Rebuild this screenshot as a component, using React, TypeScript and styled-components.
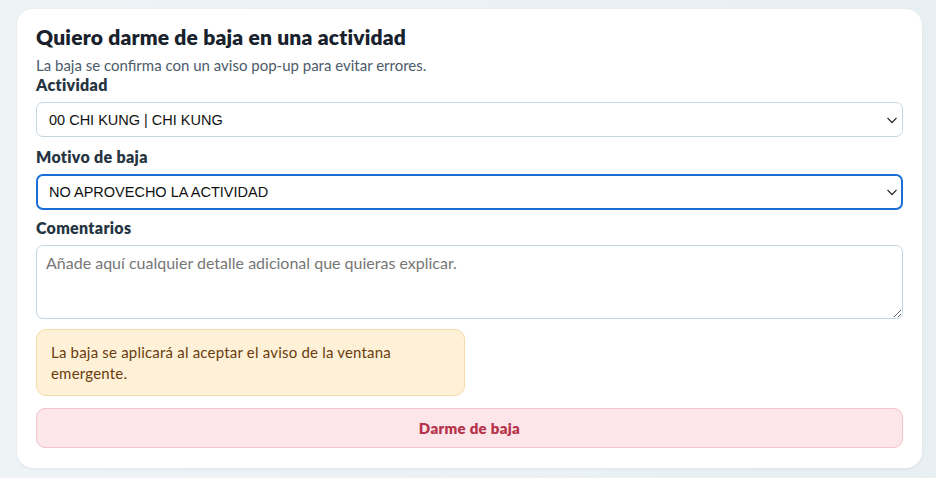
import { createGlobalStyle, styled } from "styled-components";

const GlobalStyle = createGlobalStyle`
  * { box-sizing: border-box; }
  html, body { margin: 0; padding: 0; }
  body {
    background: linear-gradient(90deg, #eef3f6 0%, #e8eff3 100%);
    font-family: Lato, "Noto Sans", sans-serif;
  }
`;

const Page = styled.div`
  width: 936px;
  height: 478px;
  padding: 9px 14px 0 17px;
`;

const Card = styled.section`
  background: #ffffff;
  border-radius: 16px;
  box-shadow: 0 1px 3px rgba(40, 70, 90, 0.08);
  padding: 15px 19px 20px 19px;
  display: flex;
  flex-direction: column;
`;

const Title = styled.h2`
  margin: 0;
  font-size: 21px;
  line-height: 26px;
  font-weight: 800;
  letter-spacing: 0.2px;
  color: #18222c;
`;

const Subtitle = styled.p`
  margin: 7px 0 0;
  font-size: 15px;
  line-height: 17px;
  color: #4b5b6a;
`;

const Field = styled.div<{ top: number }>`
  display: flex;
  flex-direction: column;
  gap: 8px;
  margin-top: ${(p) => p.top}px;
`;

const Label = styled.label`
  font-size: 16px;
  line-height: 18px;
  font-weight: 800;
  letter-spacing: 0.3px;
  color: #263542;
`;

const SelectWrap = styled.div`
  position: relative;
`;

const Select = styled.select<{ focused?: boolean }>`
  appearance: none;
  width: 100%;
  height: ${(p) => (p.focused ? 36 : 35)}px;
  padding: 0 36px 0 ${(p) => (p.focused ? 11 : 12)}px;
  border-radius: 7px;
  border: ${(p) => (p.focused ? "2px solid #1a6fd6" : "1px solid #c9d7e1")};
  background: #ffffff;
  font-family: "Liberation Sans", Arial, sans-serif;
  font-size: 14.5px;
  color: #111111;
  outline: none;
`;

const Chevron = styled.svg`
  position: absolute;
  right: 5px;
  top: 50%;
  transform: translateY(-50%);
  width: 12px;
  height: 12px;
  pointer-events: none;
`;

const TextArea = styled.textarea`
  width: 100%;
  height: 74px;
  border: 1px solid #c3d4df;
  border-radius: 7px;
  padding: 7px 9px;
  font-family: Lato, "Noto Sans", sans-serif;
  font-size: 16px;
  line-height: 20px;
  color: #222;
  resize: vertical;
  outline: none;
  &::placeholder {
    color: #767676;
  }
`;

const Notice = styled.div`
  margin-top: 10px;
  width: 429px;
  background: #fef1d8;
  border: 1px solid #f5dba6;
  border-radius: 10px;
  padding: 12px 14px 11px;
  font-size: 15px;
  line-height: 21px;
  letter-spacing: 0.2px;
  color: #6a3c0c;
`;

const DangerButton = styled.button`
  margin-top: 12px;
  width: 100%;
  height: 40px;
  background: #fde6ea;
  border: 1px solid #f6c3ce;
  border-radius: 9px;
  font-family: Lato, "Noto Sans", sans-serif;
  font-size: 15px;
  font-weight: 800;
  letter-spacing: 0.3px;
  color: #b6344b;
  cursor: pointer;
`;

const ChevronIcon = () => (
  <Chevron viewBox="0 0 12 12" fill="none">
    <path d="M1.5 4l4.5 4.5L10.5 4" stroke="#333" strokeWidth="1.3" />
  </Chevron>
);

export default function App() {
  return (
    <Page>
      <GlobalStyle />
      <Card>
        <Title>Quiero darme de baja en una actividad</Title>
        <Subtitle>La baja se confirma con un aviso pop-up para evitar errores.</Subtitle>
        <Field top={2}>
          <Label>Actividad</Label>
          <SelectWrap>
            <Select defaultValue="chi">
              <option value="chi">00 CHI KUNG | CHI KUNG</option>
            </Select>
            <ChevronIcon />
          </SelectWrap>
        </Field>
        <Field top={11}>
          <Label>Motivo de baja</Label>
          <SelectWrap>
            <Select focused defaultValue="no">
              <option value="no">NO APROVECHO LA ACTIVIDAD</option>
            </Select>
            <ChevronIcon />
          </SelectWrap>
        </Field>
        <Field top={9}>
          <Label>Comentarios</Label>
          <TextArea placeholder="Añade aquí cualquier detalle adicional que quieras explicar." />
        </Field>
        <Notice>La baja se aplicará al aceptar el aviso de la ventana emergente.</Notice>
        <DangerButton>Darme de baja</DangerButton>
      </Card>
    </Page>
  );
}
